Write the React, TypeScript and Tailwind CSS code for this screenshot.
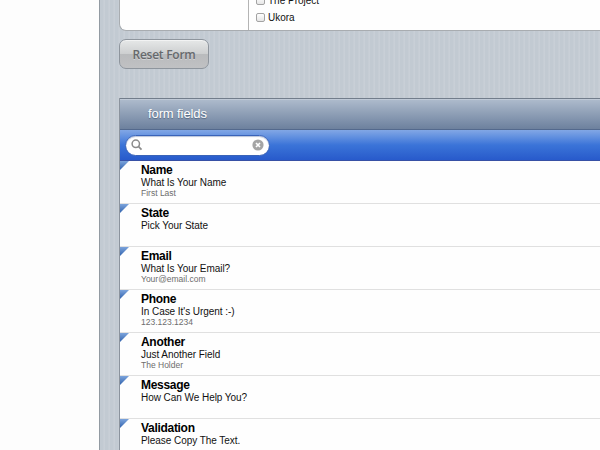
import React from "react";

type Field = { name: string; label: string; hint?: string };

const fields: Field[] = [
  { name: "Name", label: "What Is Your Name", hint: "First Last" },
  { name: "State", label: "Pick Your State" },
  { name: "Email", label: "What Is Your Email?", hint: "Your@email.com" },
  { name: "Phone", label: "In Case It's Urgent :-)", hint: "123.123.1234" },
  { name: "Another", label: "Just Another Field", hint: "The Holder" },
  { name: "Message", label: "How Can We Help You?" },
  { name: "Validation", label: "Please Copy The Text." },
];

function Option({ text }: { text: string }) {
  return (
    <div className="flex h-[17px] items-center gap-[3px]">
      <span className="h-[9px] w-[9px] rounded-[2px] border border-[#a3a3a3] bg-linear-to-b from-white to-[#e6e6e6]" />
      <span className="text-[10px] leading-[12px] text-[#111]">{text}</span>
    </div>
  );
}

function SearchField() {
  return (
    <div className="flex h-[21px] w-[145px] items-center justify-between rounded-full border border-[#3a63b8] bg-white pr-[5px] pl-[5px] shadow-[inset_0_1px_1px_#b9c4da]">
      <svg width="12" height="12" viewBox="0 0 12 12" fill="none" stroke="#8b8b8b">
        <circle cx="4.8" cy="4.8" r="3.7" strokeWidth="1.5" />
        <path d="M7.5 7.5 L10.5 10.7" strokeWidth="1.8" />
      </svg>
      <svg width="12" height="12" viewBox="0 0 12 12">
        <circle cx="6" cy="6" r="5.6" fill="#a5a5a5" />
        <path d="M4 4 L8 8 M8 4 L4 8" stroke="#fff" strokeWidth="1.6" />
      </svg>
    </div>
  );
}

function Row({ field }: { field: Field }) {
  return (
    <li className="flex h-[43px] items-start border-b border-[#e0e0e0] bg-[#fefefe]">
      <svg width="9" height="9" viewBox="0 0 9 9" className="shrink-0">
        <defs>
          <linearGradient id="corner" x1="0" y1="0" x2="0" y2="1">
            <stop offset="0" stopColor="#7ca4dc" />
            <stop offset="1" stopColor="#3162ad" />
          </linearGradient>
        </defs>
        <path d="M0 0H9L0 9Z" fill="url(#corner)" />
      </svg>
      <div className="ml-[12px] pt-[3px] whitespace-nowrap">
        <div className="text-[12px] leading-[13px] font-bold tracking-[-0.3px] text-black">{field.name}</div>
        <div className="text-[10px] leading-[11px] tracking-[-0.05px] text-[#111]">{field.label}</div>
        {field.hint && <div className="text-[8.5px] leading-[11px] text-[#6d6d6d]">{field.hint}</div>}
      </div>
    </li>
  );
}

export default function App() {
  return (
    <div className="flex h-[450px] w-[600px] overflow-hidden bg-[#fdfdfd] font-['Liberation_Sans',Arial,sans-serif]">
      <aside className="w-[99px] shrink-0" />
      <main className="flex min-w-0 flex-1 flex-col border-l border-[#929aa2] bg-[#c5ccd4] bg-[repeating-linear-gradient(90deg,#c2cad2_0px,#c2cad2_3px,#cad0d7_4px,#c7ced6_5px)] pl-[19px]">
        <section className="flex h-[31px] shrink-0 overflow-hidden rounded-bl-[7px] border-b border-l border-[#a8acb0] bg-[#fefefe]">
          <div className="w-[129px] shrink-0 border-r border-[#b4b4b4]" />
          <div className="-mt-[8px] pl-[7px]">
            <Option text="The Project" />
            <Option text="Ukora" />
          </div>
        </section>
        <button className="mt-[8px] h-[30px] w-[90px] shrink-0 rounded-[7px] border border-[#8e959d] bg-[linear-gradient(#e6e8e8_0%,#cdcfd0_49%,#b9bbbd_51%,#c0c1c3_100%)] text-center font-['Open_Sans',sans-serif] text-[12px] leading-[29px] font-semibold tracking-[-0.25px] text-[#66696c] shadow-[inset_0_1px_0_#f2f3f3] text-shadow-[0_1px_0_#d2d3d4]">
          Reset Form
        </button>
        <section className="mt-[29px] flex shrink-0 flex-col border-l border-[#8b939d]">
          <header className="flex h-[32px] items-center border-t border-b border-t-[#727d8b] border-b-[#53698d] bg-linear-to-b from-[#afbccd] to-[#6d819e] pl-[28px] text-[13px] tracking-[-0.1px] text-white shadow-[inset_0_1px_0_#c0cad7] text-shadow-[0_1px_1px_#53657e]">
            form fields
          </header>
          <div className="flex h-[31px] items-center border-b border-[#3750a5] bg-linear-to-b from-[#82a7e5] via-[#3b74d8] to-[#285acb] pl-[5px]">
            <SearchField />
          </div>
          <ul>
            {fields.map((f) => (
              <Row key={f.name} field={f} />
            ))}
          </ul>
        </section>
      </main>
    </div>
  );
}
